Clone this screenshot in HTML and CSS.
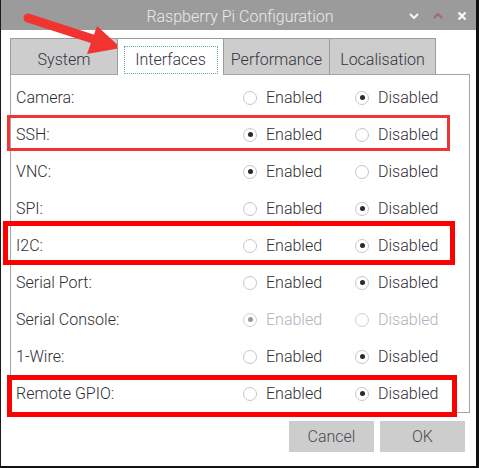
FILE: index.html
```html
<!DOCTYPE html>
<html>
<head>
<meta charset="utf-8">
<link rel="stylesheet" href="styles.css">
</head>
<body>
<div class="window">
  <div class="titlebar">
    <span></span>
    <span class="title">Raspberry Pi Configuration</span>
    <span class="controls">
      <svg class="ctl" width="10" height="8" viewBox="0 0 10 8"><path d="M1 2 L5 6 L9 2" fill="none" stroke="#f4f4f4" stroke-width="2.2"/></svg>
      <svg class="ctl" width="10" height="8" viewBox="0 0 10 8"><path d="M1 6 L5 2 L9 6" fill="none" stroke="#a86868" stroke-width="2.2"/></svg>
      <svg class="ctl" width="10" height="10" viewBox="0 0 10 10"><path d="M1.5 1.5 L8.5 8.5 M8.5 1.5 L1.5 8.5" fill="none" stroke="#f8f8f8" stroke-width="2.4"/></svg>
    </span>
  </div>

  <div class="tabs">
    <div class="tab tab-system">System</div>
    <div class="tab tab-interfaces active"><span class="focus">Interfaces</span></div>
    <div class="tab tab-performance">Performance</div>
    <div class="tab tab-localisation">Localisation</div>
  </div>

  <div class="panel">
    <div class="row"><span class="label">Camera:</span><span class="opt"><i class="radio"></i>Enabled</span><span class="opt"><i class="radio on"></i>Disabled</span></div>
    <div class="row"><span class="label">SSH:</span><span class="opt"><i class="radio on"></i>Enabled</span><span class="opt"><i class="radio"></i>Disabled</span></div>
    <div class="row"><span class="label">VNC:</span><span class="opt"><i class="radio on"></i>Enabled</span><span class="opt"><i class="radio"></i>Disabled</span></div>
    <div class="row"><span class="label">SPI:</span><span class="opt"><i class="radio"></i>Enabled</span><span class="opt"><i class="radio on"></i>Disabled</span></div>
    <div class="row"><span class="label">I2C:</span><span class="opt"><i class="radio"></i>Enabled</span><span class="opt"><i class="radio on"></i>Disabled</span></div>
    <div class="row"><span class="label">Serial Port:</span><span class="opt"><i class="radio"></i>Enabled</span><span class="opt"><i class="radio on"></i>Disabled</span></div>
    <div class="row"><span class="label">Serial Console:</span><span class="opt disabled"><i class="radio on"></i>Enabled</span><span class="opt disabled"><i class="radio"></i>Disabled</span></div>
    <div class="row"><span class="label">1-Wire:</span><span class="opt"><i class="radio"></i>Enabled</span><span class="opt"><i class="radio on"></i>Disabled</span></div>
    <div class="row"><span class="label">Remote GPIO:</span><span class="opt"><i class="radio"></i>Enabled</span><span class="opt"><i class="radio on"></i>Disabled</span></div>
  </div>

  <div class="buttons">
    <button class="btn">Cancel</button>
    <button class="btn">OK</button>
  </div>
</div>

<div class="mark mark-ssh"></div>
<div class="mark mark-i2c"></div>
<div class="mark mark-gpio"></div>

<svg class="arrow" width="130" height="60" viewBox="0 0 130 60">
  <line x1="28" y1="18" x2="96" y2="40" stroke="#f23431" stroke-width="9" stroke-linecap="round"/>
  <polygon points="97,26 87,54 121,48" fill="#f23431"/>
</svg>
</body>
</html>
```

FILE: styles.css
```css
html, body {
  margin: 0;
  padding: 0;
  background: #ffffff;
}
body {
  position: relative;
  width: 479px;
  height: 468px;
  overflow: hidden;
  font-family: Roboto, "Liberation Sans", sans-serif;
  font-weight: 300;
  font-size: 16px;
  color: #2e2e34;
}
.window {
  box-sizing: border-box;
  width: 479px;
  height: 468px;
  border-left: 1px solid #1a1a1a;
  border-right: 3px solid #111;
  border-bottom: 2px solid #111;
  background: #ffffff;
  display: flex;
  flex-direction: column;
}
.titlebar {
  height: 30px;
  background: #9b9b9b;
  display: grid;
  grid-template-columns: 1fr auto 1fr;
  align-items: center;
}
.title {
  color: #e6ecec;
  font-size: 16px;
  padding-top: 2px;
  padding-left: 3px;
}
.controls {
  justify-self: end;
  display: flex;
  align-items: center;
  gap: 14px;
  padding-right: 9px;
  padding-top: 2px;
}
.ctl { display: block; }

.tabs {
  display: flex;
  margin: 8px 0 0 9px;
  height: 36px;
}
.tab {
  box-sizing: border-box;
  height: 36px;
  background: #cdcdcd;
  border: 1px solid #9c9c9c;
  border-bottom: none;
  border-right: none;
  display: flex;
  align-items: center;
  justify-content: center;
  padding-top: 5px;
  color: #34343e;
}
.tab-system { width: 107px; }
.tab-interfaces { width: 106px; }
.tab-performance { width: 106px; }
.tab-localisation { width: 107px; border-right: 1px solid #9c9c9c; }
.tab.active {
  background: #ffffff;
  padding-top: 4px;
  position: relative;
  z-index: 1;
  height: 37px;
}
.focus {
  box-sizing: border-box;
  width: 94px;
  height: 28px;
  display: flex;
  align-items: center;
  justify-content: center;
  outline: 1px dotted #6aa8b0;
  outline-offset: -1px;
  margin-top: 1px;
}

.panel {
  box-sizing: border-box;
  margin: 0 6px 0 9px;
  border: 1px solid #a4a4a4;
  padding: 4px 0 0 5px;
  height: 339px;
}
.row {
  height: 37px;
  display: grid;
  grid-template-columns: 227px 112px auto;
  align-items: center;
}
.opt {
  display: flex;
  align-items: center;
  gap: 9px;
  color: #2e2e34;
}
.opt.disabled { color: #adb4be; }
.radio {
  box-sizing: border-box;
  width: 14px;
  height: 14px;
  border: 1px solid #c6c6c6;
  border-radius: 50%;
  background: #fff;
  display: flex;
  align-items: center;
  justify-content: center;
}
.radio.on::after {
  content: "";
  width: 5px;
  height: 5px;
  border-radius: 50%;
  background: #2a2a2a;
}
.opt.disabled .radio.on::after { background: #9a9a9a; }
.opt.disabled .radio { border-color: #d0d0d0; }

.buttons {
  display: flex;
  justify-content: flex-end;
  gap: 6px;
  margin-top: 8px;
  padding-right: 11px;
}
.btn {
  width: 85px;
  height: 31px;
  border: none;
  background: #cdcdcd;
  font-family: Roboto, "Liberation Sans", sans-serif;
  font-weight: 300;
  font-size: 16px;
  color: #4a4a50;
  padding: 0;
}

.mark {
  position: absolute;
  box-sizing: border-box;
  pointer-events: none;
}
.mark-ssh {
  left: 7px; top: 115px; width: 443px; height: 36px;
  border: 3px solid #f03434;
}
.mark-i2c {
  left: 3px; top: 221px; width: 452px; height: 44px;
  border: 5px solid #ff0000;
}
.mark-gpio {
  left: 7px; top: 375px; width: 450px; height: 42px;
  border: 5px solid #ff0000;
}
.arrow {
  position: absolute;
  left: 0;
  top: 0;
}
```
